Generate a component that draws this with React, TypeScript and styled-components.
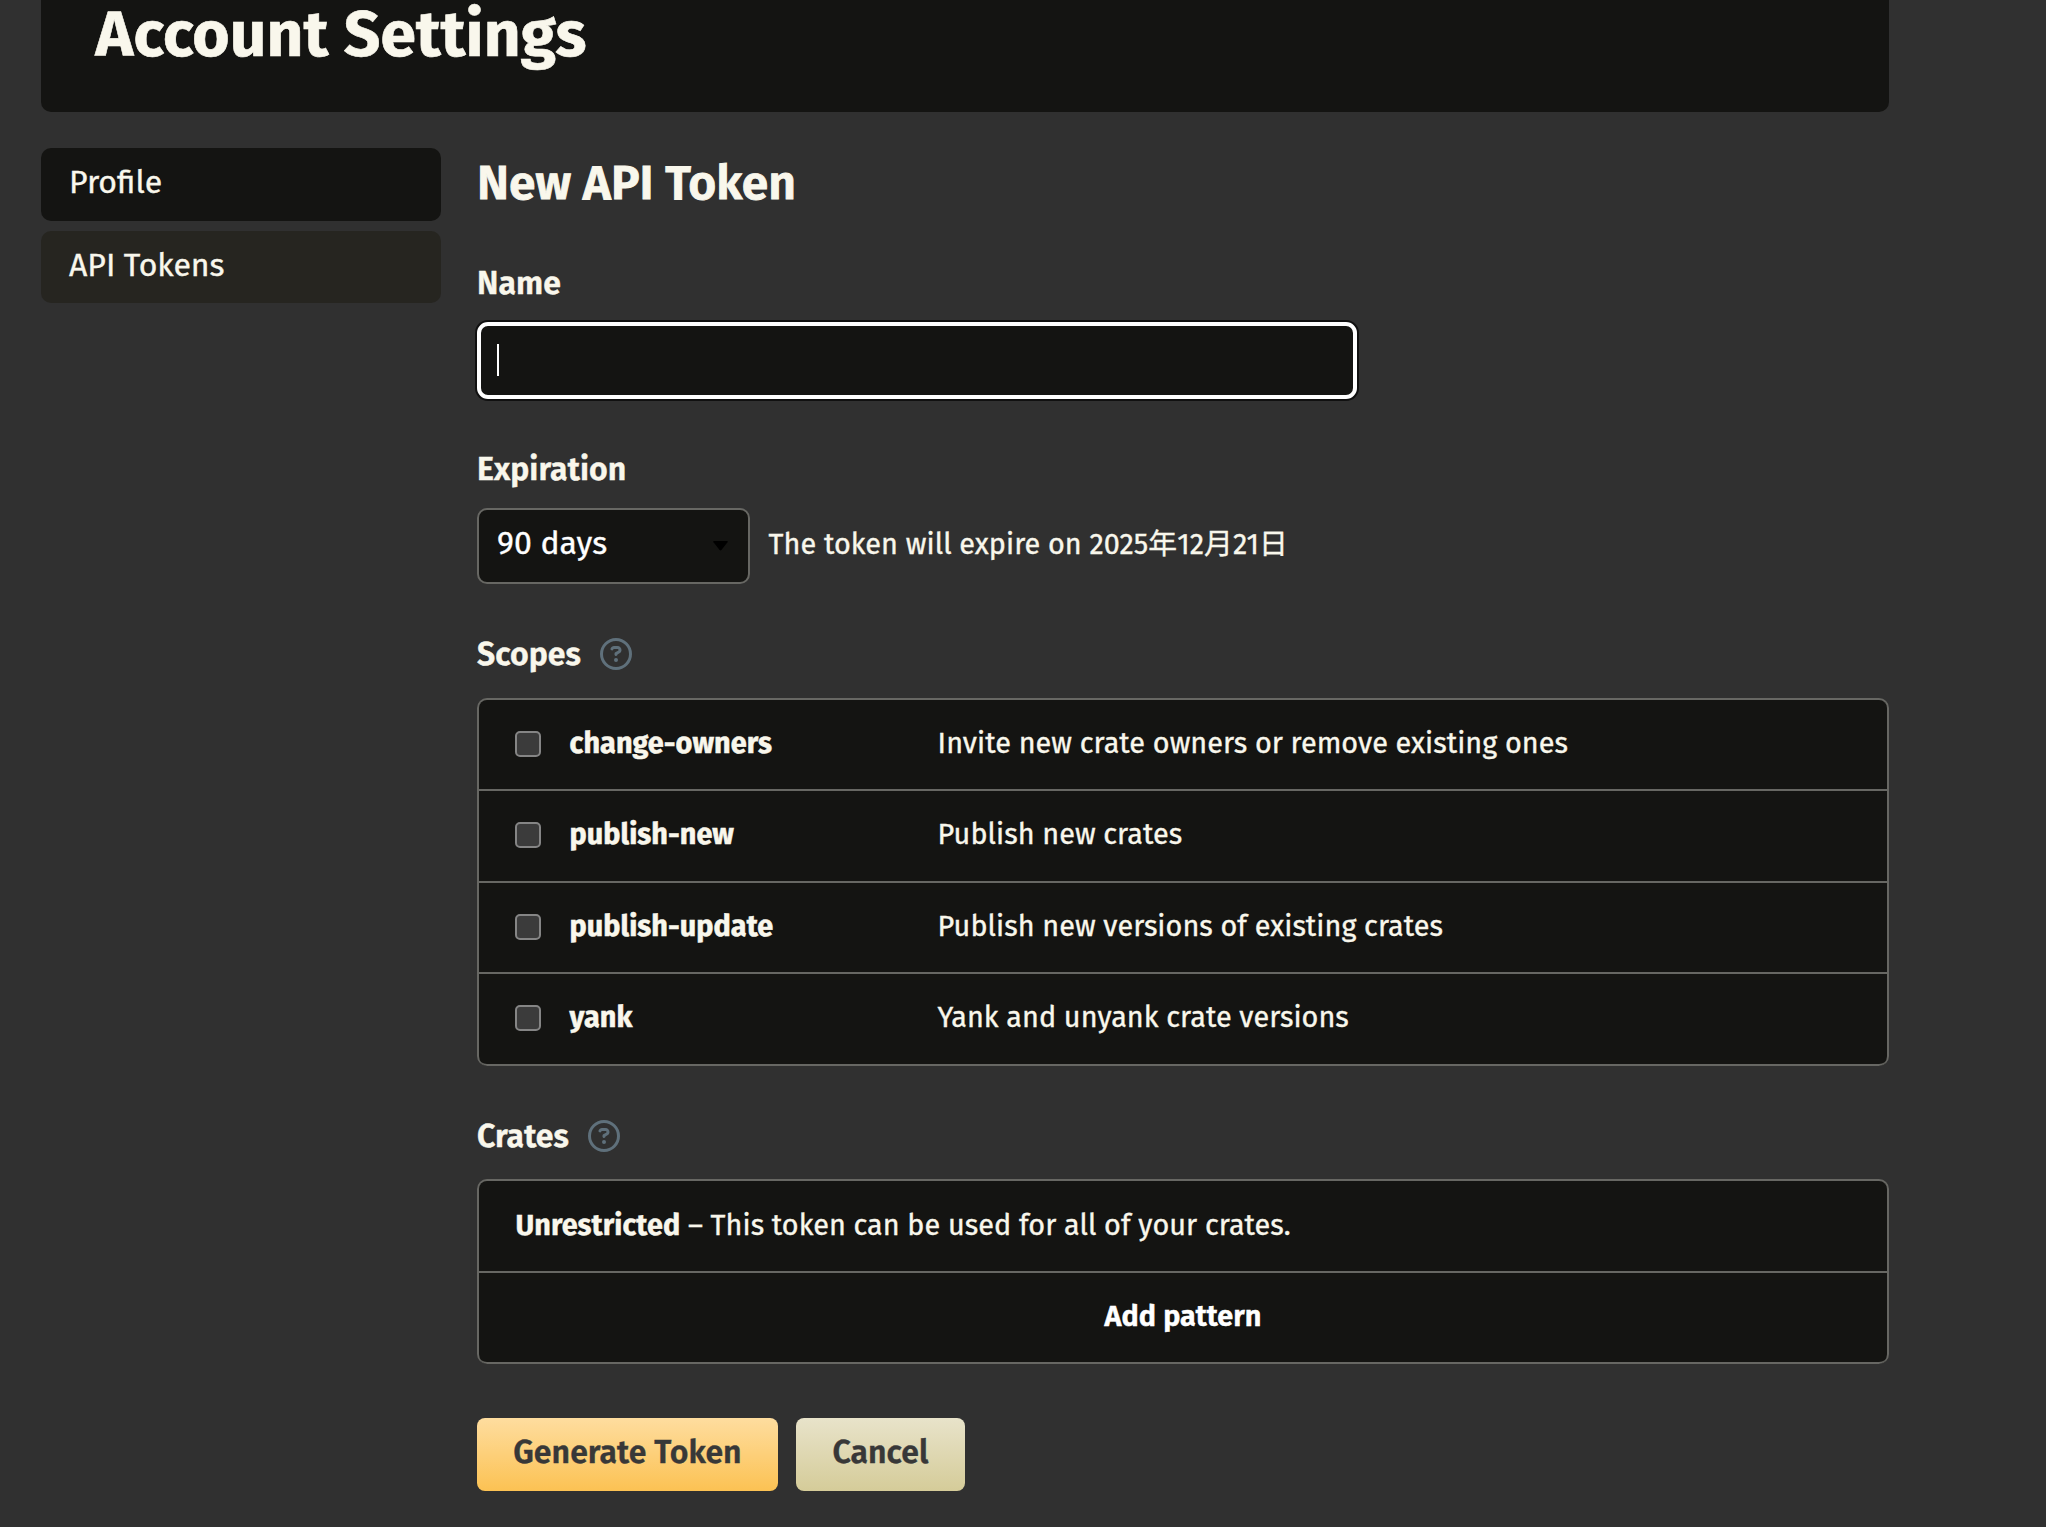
import React from 'react';
import styled, { createGlobalStyle } from 'styled-components';
import { FaRegCircleQuestion } from 'react-icons/fa6';

const color = {
  page: '#303030',
  panel: '#141412',
  panelActive: '#262520',
  line: '#676763',
  text: '#f9f7ec',
  help: '#5f707b',
};

const GlobalStyle = createGlobalStyle`
  *, *::before, *::after { box-sizing: border-box; }
  html { background: ${color.page}; }
  body {
    margin: 0;
    color: ${color.text};
    background: ${color.page};
    font-family: 'Fira Sans', 'Noto Sans', 'Noto Sans CJK JP', sans-serif;
    font-size: 32px;
    line-height: 38px;
    -webkit-text-stroke: 0.35px currentColor;
    overflow: hidden;
  }
`;

const Page = styled.main`
  display: flex;
  flex-direction: column;
  width: 1848px;
  height: 1527px;
  margin-left: 41px;
`;

const PageHeader = styled.header`
  flex: none;
  height: 116px;
  margin-top: -4px;
  padding: 0 54.5px;
  border-radius: 0 0 10px 10px;
  background: ${color.panel};
`;

const PageTitle = styled.h1`
  margin: 0;
  font-size: 64px;
  font-weight: 700;
  line-height: 77px;
  letter-spacing: 0.12px;
  -webkit-text-stroke-width: 0.6px;
`;

const Columns = styled.div`
  display: grid;
  grid-template-columns: 400px 1fr;
  column-gap: 36px;
  margin-top: 36px;
`;

const SideMenu = styled.nav`
  display: flex;
  flex-direction: column;
  gap: 10px;
`;

const MenuLink = styled.a<{ $active?: boolean }>`
  height: 72.6px;
  padding: 15px 28px 0;
  border-radius: 10px;
  color: inherit;
  background: ${(p) => (p.$active ? color.panelActive : color.panel)};
`;

const Form = styled.form`
  display: flex;
  flex-direction: column;
  padding-top: 6px;
`;

const Heading = styled.h2`
  margin: 0 0 52px;
  font-size: 48px;
  font-weight: 600;
  line-height: 58px;
  -webkit-text-stroke-width: 0.9px;
`;

const Field = styled.section<{ $gap?: number }>`
  display: flex;
  flex-direction: column;
  gap: ${(p) => p.$gap ?? 20}px;

  & + & {
    margin-top: 51px;
  }
`;

const Label = styled.div`
  display: flex;
  align-items: center;
  gap: 18.8px;
  height: 38px;
  font-weight: 600;
  letter-spacing: 0.07px;
  -webkit-text-stroke-width: 0.5px;
`;

const HelpIcon = styled(FaRegCircleQuestion)`
  width: 32px;
  height: 32px;
  color: ${color.help};
`;

const NameInput = styled.div`
  display: flex;
  align-items: center;
  width: 880px;
  height: 77px;
  padding: 0 0 1px 16px;
  border: 4px solid #fff;
  border-radius: 11px;
  background: ${color.panel};
  box-shadow: 0 0 0 2px #101010;
`;

const Caret = styled.span`
  width: 2px;
  height: 32px;
  background: #fff;
`;

const ExpiryRow = styled.div`
  display: flex;
  align-items: center;
  gap: 18.6px;
`;

const Select = styled.div`
  display: flex;
  align-items: center;
  justify-content: space-between;
  width: 273px;
  height: 76px;
  padding: 0 20px 0 18px;
  border: 2px solid ${color.line};
  border-radius: 10px;
  color: #fff;
  background: ${color.panel};
`;

const SelectValue = styled.span`
  padding-bottom: 6px;
  letter-spacing: 0.08px;
`;

const SelectArrow = styled.svg`
  width: 15px;
  height: 10px;
  fill: #000;
`;

const ExpiryNote = styled.span`
  padding-bottom: 3px;
  font-size: 28.8px;
  line-height: 35px;
  letter-spacing: 0.06px;
`;

const List = styled.div`
  display: flex;
  flex-direction: column;
  overflow: hidden;
  border: 2px solid ${color.line};
  border-bottom: 0;
  border-radius: 10px;
  background: ${color.panel};
  font-size: 28.8px;
  line-height: 35px;
  letter-spacing: 0.045px;
`;

const Row = styled.div<{ $center?: boolean }>`
  display: flex;
  align-items: flex-start;
  justify-content: ${(p) => (p.$center ? 'center' : 'flex-start')};
  height: 91.55px;
  padding: 26.32px 36px 0;
  border-bottom: 2px solid ${color.line};

  &:last-child {
    border-radius: 0 0 8px 8px;
  }
`;

const Checkbox = styled.span`
  flex: none;
  width: 26px;
  height: 26px;
  margin: 4.98px 28.6px 0 0;
  border: 2px solid #858585;
  border-radius: 5px;
  background: #3b3b3b;
`;

const ScopeName = styled.strong`
  flex: none;
  width: 368px;
  font-weight: 700;
  -webkit-text-stroke-width: 0.5px;
`;

const Sentence = styled.span`
  padding-left: 0.5px;
  white-space: pre;
`;

const PatternButton = styled.span`
  color: #fff;
  font-weight: 600;
  -webkit-text-stroke-width: 0.6px;
`;

const Actions = styled.div`
  display: flex;
  gap: 18px;
  margin-top: 53.5px;
`;

const ActionButton = styled.button<{ $tan?: boolean }>`
  display: flex;
  align-items: flex-start;
  justify-content: center;
  width: ${(p) => (p.$tan ? 169 : 301)}px;
  height: 73px;
  padding: 15px 0 0;
  border: 0;
  border-radius: 8px;
  color: #383838;
  background: ${(p) =>
    p.$tan
      ? 'linear-gradient(#e8e3ca, #d5cc99)'
      : 'linear-gradient(#fedd9f, #fcc253)'};
  font: 600 32px/38px 'Fira Sans', 'Noto Sans', sans-serif;
  letter-spacing: 0.06px;
`;

const scopes = [
  ['change-owners', 'Invite new crate owners or remove existing ones'],
  ['publish-new', 'Publish new crates'],
  ['publish-update', 'Publish new versions of existing crates'],
  ['yank', 'Yank and unyank crate versions'],
];

export default function App() {
  return (
    <>
      <GlobalStyle />
      <Page>
        <PageHeader>
          <PageTitle>Account Settings</PageTitle>
        </PageHeader>
        <Columns>
          <SideMenu>
            <MenuLink>Profile</MenuLink>
            <MenuLink $active>API Tokens</MenuLink>
          </SideMenu>
          <Form>
            <Heading>New API Token</Heading>
            <Field>
              <Label>Name</Label>
              <NameInput>
                <Caret />
              </NameInput>
            </Field>
            <Field>
              <Label>Expiration</Label>
              <ExpiryRow>
                <Select>
                  <SelectValue>90 days</SelectValue>
                  <SelectArrow viewBox="0 0 15 10">
                    <path d="M1 0h13q1.3.2.5 1.3L8.4 9.1q-.9.9-1.8 0L.5 1.3Q-.3.2 1 0z" />
                  </SelectArrow>
                </Select>
                <ExpiryNote>The token will expire on 2025年12月21日</ExpiryNote>
              </ExpiryRow>
            </Field>
            <Field $gap={24.5}>
              <Label>
                Scopes
                <HelpIcon />
              </Label>
              <List>
                {scopes.map(([name, description]) => (
                  <Row key={name}>
                    <Checkbox />
                    <ScopeName>{name}</ScopeName>
                    <span>{description}</span>
                  </Row>
                ))}
              </List>
            </Field>
            <Field $gap={24.5}>
              <Label>
                Crates
                <HelpIcon />
              </Label>
              <List>
                <Row>
                  <Sentence>
                    <strong>Unrestricted</strong> – This token can be used for all of your crates.
                  </Sentence>
                </Row>
                <Row $center>
                  <PatternButton>Add pattern</PatternButton>
                </Row>
              </List>
            </Field>
            <Actions>
              <ActionButton type="button">Generate Token</ActionButton>
              <ActionButton type="button" $tan>
                Cancel
              </ActionButton>
            </Actions>
          </Form>
        </Columns>
      </Page>
    </>
  );
}
